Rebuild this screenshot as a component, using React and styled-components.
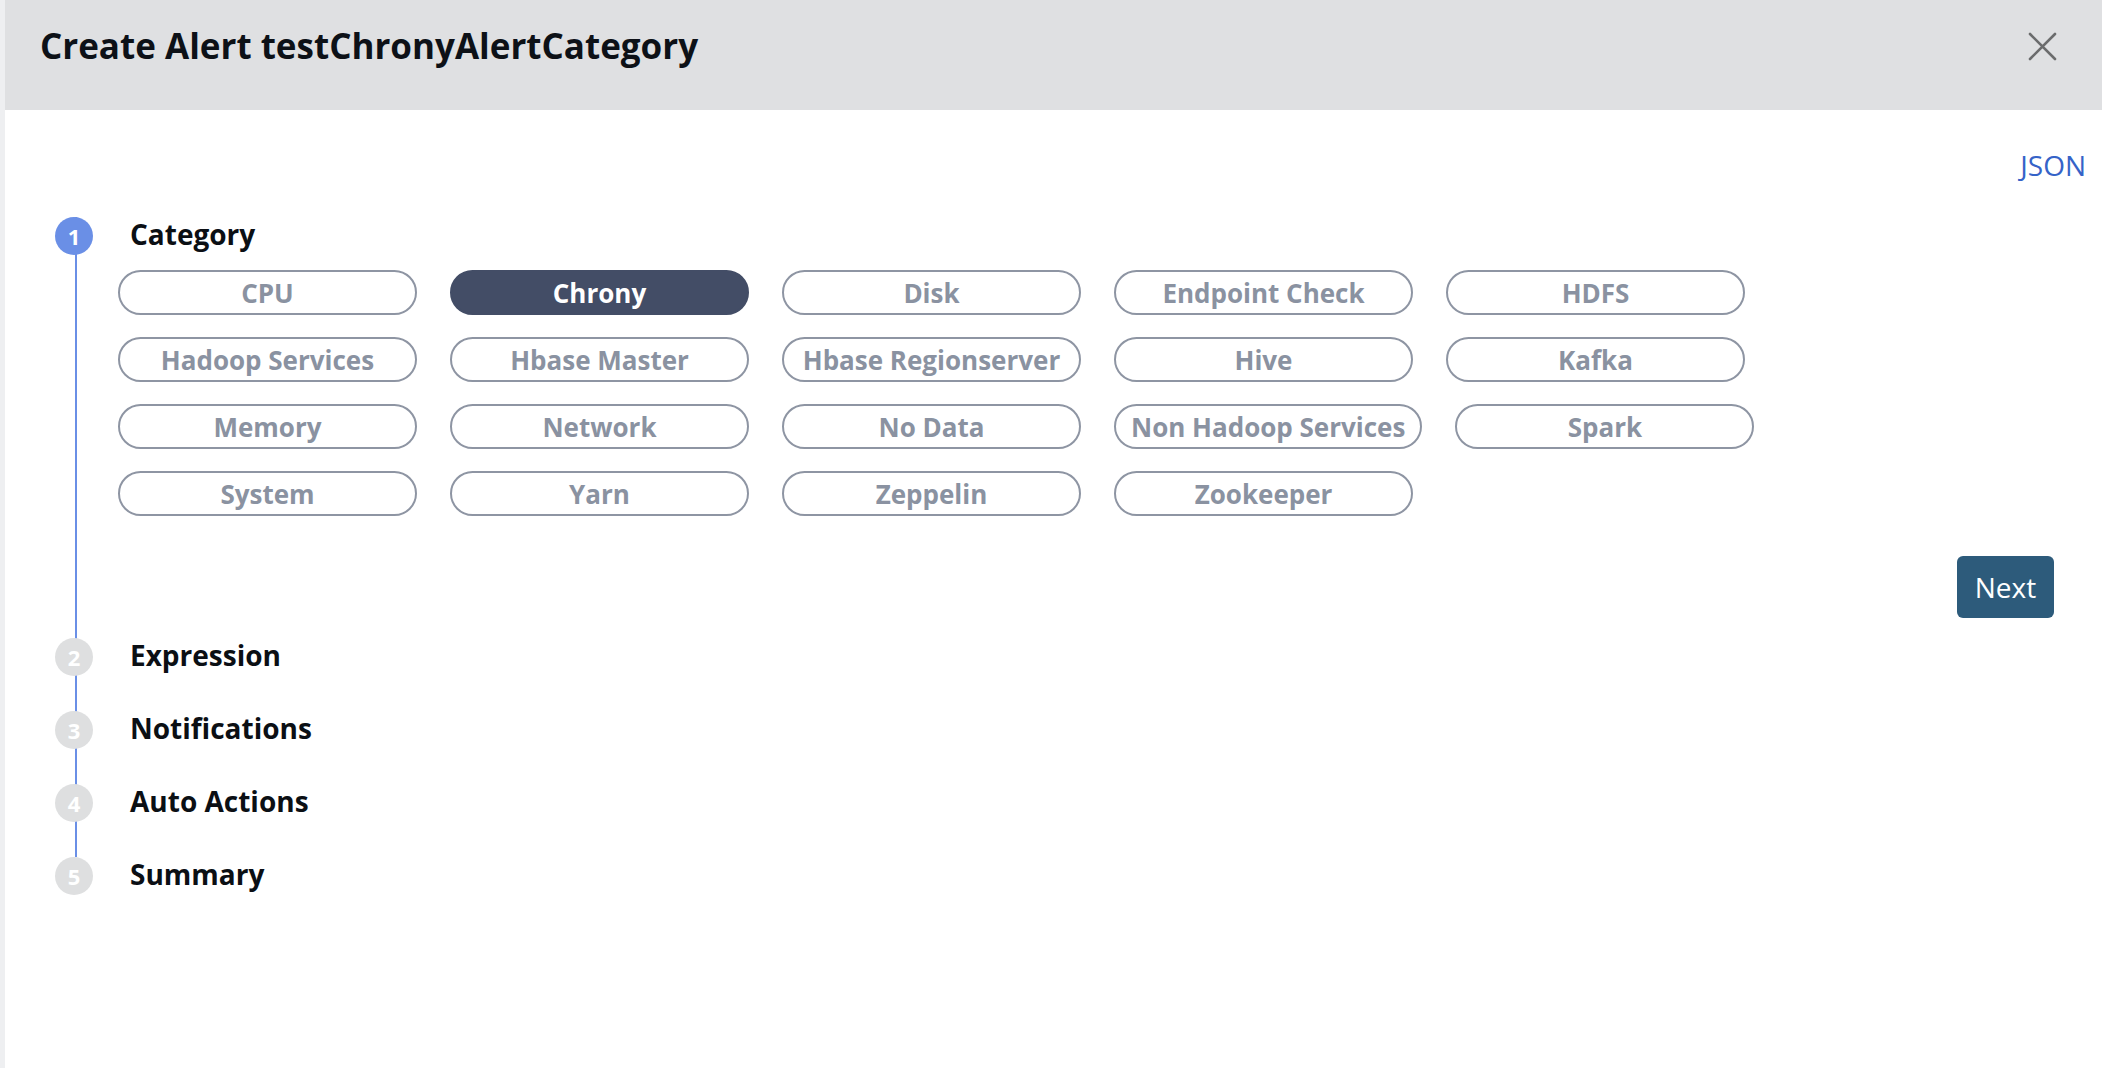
import styled, {createGlobalStyle} from "styled-components";

const GlobalStyle = createGlobalStyle`
    html, body {
        margin: 0;
        padding: 0;
        background: #ffffff;
        font-family: "Open Sans", "Noto Sans", sans-serif;
    }
    * {
        box-sizing: border-box;
    }
`

const Page = styled.div`
    display: flex;
    min-height: 1068px;
`
const EdgeStrip = styled.div`
    width: 5px;
    background-color: #eeeff1;
`
const Modal = styled.div`
    flex: 1;
    display: flex;
    flex-direction: column;
    background-color: #ffffff;
`
const Header = styled.div`
    height: 110px;
    background-color: #dfe0e2;
    display: flex;
    align-items: flex-start;
    justify-content: space-between;
    padding: 22px 44px 0 35px;
`
const Title = styled.h1`
    margin: 0;
    font-size: 35px;
    line-height: 48px;
    font-weight: 700;
    color: #0d1117;
`
const CloseButton = styled.button`
    border: none;
    background: none;
    padding: 0;
    margin-top: 9px;
    width: 31px;
    height: 31px;
    cursor: pointer;
    display: flex;
`
const Body = styled.div`
    padding: 36px 16px 0 50px;
`
const JsonRow = styled.div`
    display: flex;
    justify-content: flex-end;
`
const JsonLink = styled.a`
    font-size: 28px;
    line-height: 39px;
    color: #3563c8;
    cursor: pointer;
`
const Stepper = styled.div`
    position: relative;
    margin-top: 32px;
    &::before {
        content: "";
        position: absolute;
        left: 20px;
        top: 0;
        bottom: 38px;
        width: 2px;
        background-color: #6a8fe6;
    }
`
const Step = styled.div`
    position: relative;
    margin-bottom: ${p => p.$gap}px;
`
const StepHead = styled.div`
    display: flex;
    align-items: center;
    gap: 37px;
    height: 38px;
`
const Circle = styled.div`
    position: relative;
    z-index: 1;
    width: 38px;
    height: 38px;
    border-radius: 50%;
    background-color: ${p => (p.$active ? "#6a8fe6" : "#dedfe0")};
    color: #ffffff;
    font-size: 22px;
    font-weight: 700;
    display: flex;
    align-items: center;
    justify-content: center;
`
const StepLabel = styled.div`
    font-size: 28px;
    font-weight: 700;
    color: #0b0f14;
    margin-top: -5px;
`
const StepContent = styled.div`
    padding-left: 63px;
    margin-top: 15px;
`
const ChipGrid = styled.div`
    display: flex;
    flex-wrap: wrap;
    gap: 22px 33px;
    max-width: 1700px;
`
const Chip = styled.button`
    min-width: 299px;
    height: 45px;
    padding: 0 15px;
    border-radius: 23px;
    border: 2px solid ${p => (p.$selected ? "#434d66" : "#8e95a3")};
    background-color: ${p => (p.$selected ? "#434d66" : "#ffffff")};
    color: ${p => (p.$selected ? "#ffffff" : "#8a92a1")};
    font-family: "Open Sans", "Noto Sans", sans-serif;
    font-size: 26px;
    font-weight: 700;
    white-space: nowrap;
    cursor: pointer;
`
const Actions = styled.div`
    display: flex;
    justify-content: flex-end;
    padding-right: 32px;
    margin-top: 40px;
`
const NextButton = styled.button`
    width: 97px;
    height: 62px;
    border: none;
    border-radius: 6px;
    background-color: #2d5b7b;
    color: #ffffff;
    font-family: "Open Sans", "Noto Sans", sans-serif;
    font-size: 28px;
    cursor: pointer;
`

const categories = [
    "CPU", "Chrony", "Disk", "Endpoint Check", "HDFS",
    "Hadoop Services", "Hbase Master", "Hbase Regionserver", "Hive", "Kafka",
    "Memory", "Network", "No Data", "Non Hadoop Services", "Spark",
    "System", "Yarn", "Zeppelin", "Zookeeper",
]

const laterSteps = ["Expression", "Notifications", "Auto Actions", "Summary"]

function CloseIcon() {
    return (
        <svg width="31" height="31" viewBox="0 0 31 31">
            <path d="M3 3 L28 28 M28 3 L3 28" stroke="#6b6c6d" strokeWidth="2.6" strokeLinecap="round"/>
        </svg>
    )
}

export default function App() {
    return (
        <>
            <GlobalStyle/>
            <Page>
                <EdgeStrip/>
                <Modal>
                    <Header>
                        <Title>Create Alert testChronyAlertCategory</Title>
                        <CloseButton aria-label="close"><CloseIcon/></CloseButton>
                    </Header>
                    <Body>
                        <JsonRow>
                            <JsonLink>JSON</JsonLink>
                        </JsonRow>
                        <Stepper>
                            <Step $gap={20}>
                                <StepHead>
                                    <Circle $active>1</Circle>
                                    <StepLabel>Category</StepLabel>
                                </StepHead>
                                <StepContent>
                                    <ChipGrid>
                                        {categories.map(c => (
                                            <Chip key={c} $selected={c === "Chrony"}>{c}</Chip>
                                        ))}
                                    </ChipGrid>
                                    <Actions>
                                        <NextButton>Next</NextButton>
                                    </Actions>
                                </StepContent>
                            </Step>
                            {laterSteps.map((s, i) => (
                                <Step key={s} $gap={i === laterSteps.length - 1 ? 0 : 35}>
                                    <StepHead>
                                        <Circle>{i + 2}</Circle>
                                        <StepLabel>{s}</StepLabel>
                                    </StepHead>
                                </Step>
                            ))}
                        </Stepper>
                    </Body>
                </Modal>
            </Page>
        </>
    )
}
